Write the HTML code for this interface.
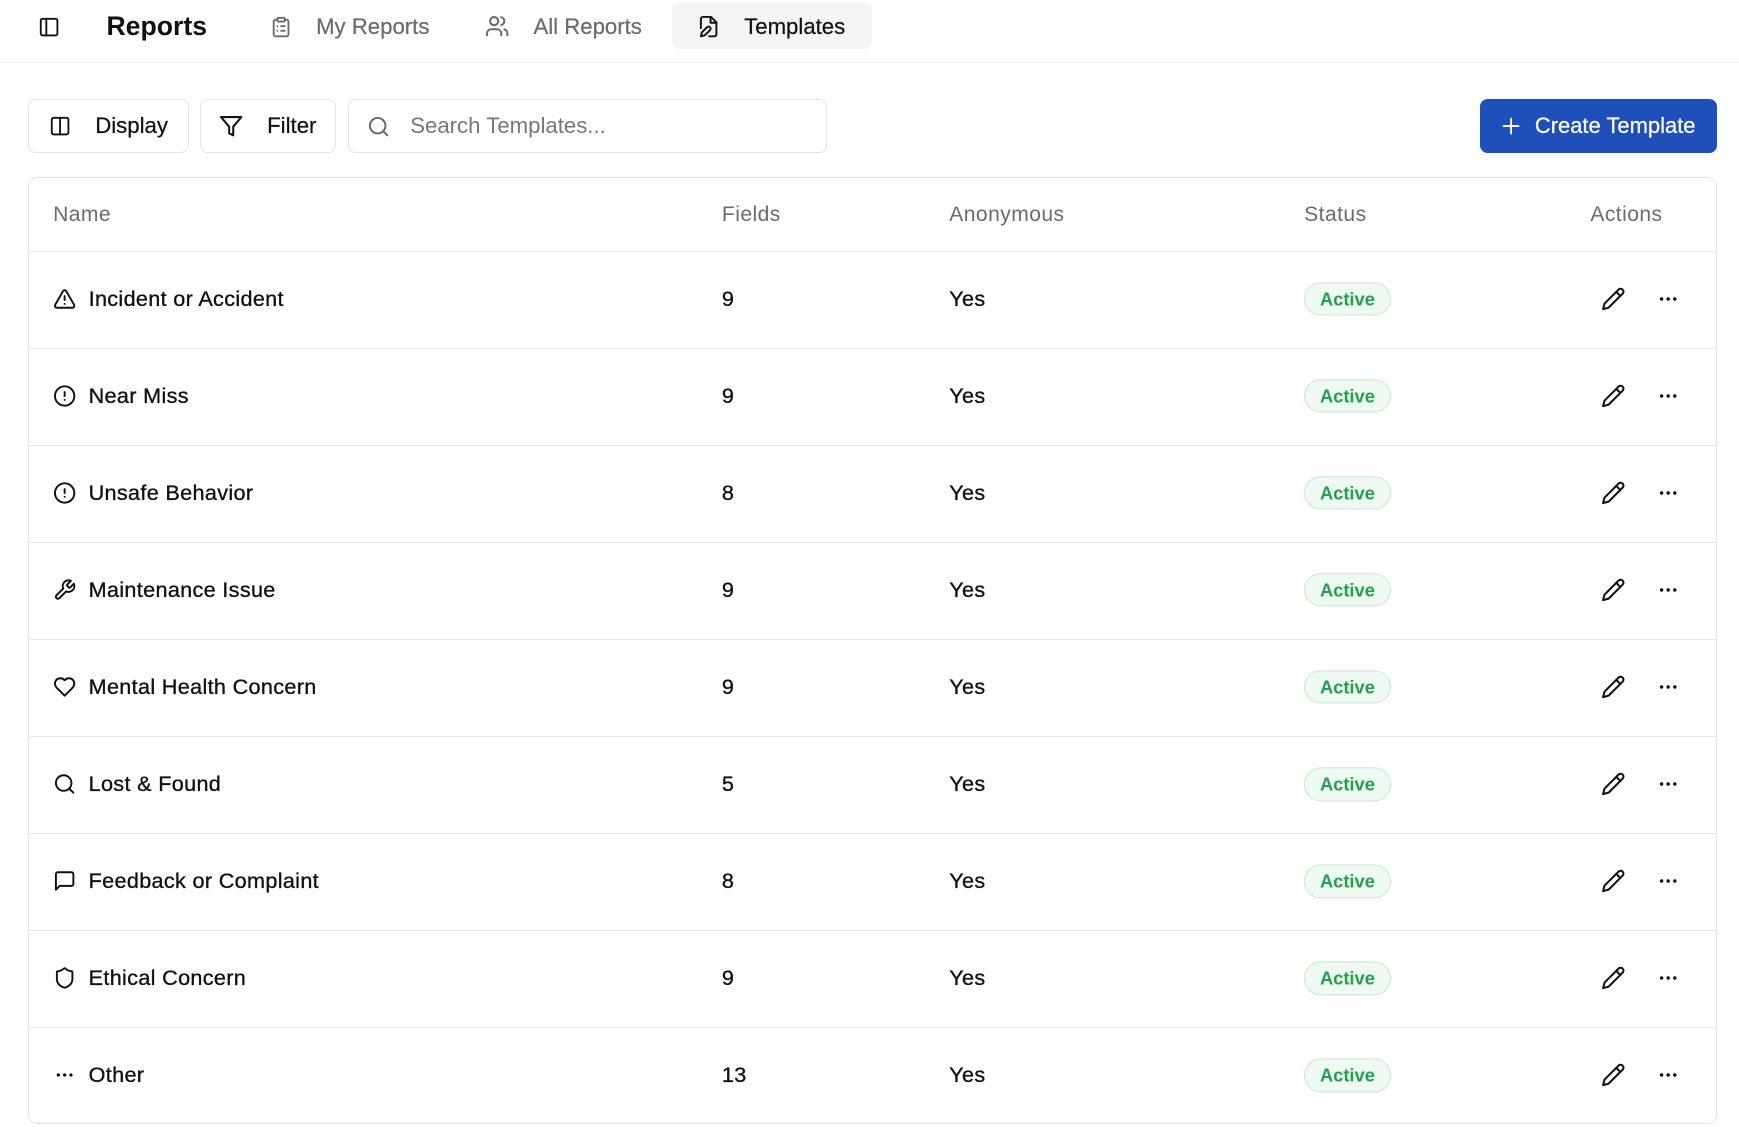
<!DOCTYPE html>
<html><head><meta charset="utf-8">
<style>
*{box-sizing:border-box;margin:0;padding:0}
html,body{width:1739px;height:1127px;overflow:hidden;background:#fff}
#w{zoom:1.1091;width:1568px;height:1016px;position:relative;font-family:"Liberation Sans",sans-serif;color:#111}
.abs{position:absolute}
svg{fill:none;stroke:currentColor;stroke-width:2;stroke-linecap:round;stroke-linejoin:round}
svg.d{fill:currentColor;stroke:none}
.hdr{position:absolute;left:0;top:0;width:1568px;height:57px;border-bottom:1px solid #eee}
.tab{position:absolute;top:2px;height:42px;padding-top:2px;display:flex;align-items:center;font-size:20px;color:#6b6b6b;-webkit-text-stroke:.2px currentColor}
.btn{position:absolute;top:89px;height:49px;border:1px solid #e4e4e7;border-radius:7px;display:flex;align-items:center;font-size:20px;color:#111;padding-top:1px;-webkit-text-stroke:.2px currentColor}
.tbl{position:absolute;left:25px;top:160px;width:1523px;height:853px;border:1px solid #e4e4e7;border-radius:8px}
.th{position:absolute;top:0;height:66px;line-height:66px;font-size:19px;letter-spacing:.4px;color:#6b6b6b}
.row{position:absolute;left:0;width:1521px;height:87.5px;border-top:1px solid #e7e7e7;font-size:19.5px;letter-spacing:.3px;-webkit-text-stroke:.3px currentColor}
.row>*{position:absolute;top:calc(50% - 1px);transform:translateY(-50%)}
.badge{left:1150px;height:30px;width:78px;border:1px solid #c7e8d0;background:#eef9f1;color:#22a04b;font-weight:bold;font-size:16.5px;letter-spacing:0;border-radius:15px;text-align:center;line-height:28px;-webkit-text-stroke:0}
</style></head><body><div id="w">
<div class="hdr">
 <svg class="abs" style="left:34px;top:14px" width="20" height="20" viewBox="0 0 24 24"><rect x="3" y="3" width="18" height="18" rx="2"/><path d="M9 3v18"/></svg>
 <div class="abs" style="left:96px;top:10px;font-size:24px;font-weight:bold;color:#111">Reports</div>
 <div class="tab" style="left:243px"><svg width="20" height="20" viewBox="0 0 24 24"><rect x="8" y="2" width="8" height="4" rx="1"/><path d="M16 4h2a2 2 0 0 1 2 2v14a2 2 0 0 1-2 2H6a2 2 0 0 1-2-2V6a2 2 0 0 1 2-2h2M12 11h4M12 16h4M8 11h.01M8 16h.01"/></svg><span style="margin-left:22px">My Reports</span></div>
 <div class="tab" style="left:437px"><svg width="22" height="22" viewBox="0 0 24 24"><path d="M16 21v-2a4 4 0 0 0-4-4H6a4 4 0 0 0-4 4v2"/><circle cx="9" cy="7" r="4"/><path d="M22 21v-2a4 4 0 0 0-3-3.87M16 3.13a4 4 0 0 1 0 7.75"/></svg><span style="margin-left:22px">All Reports</span></div>
 <div class="tab" style="left:606px;width:180px;background:#f4f4f5;border-radius:8px;color:#111;padding-left:22px"><svg width="21" height="21" viewBox="0 0 24 24"><path d="M4 13.5V4a2 2 0 0 1 2-2h8.5L20 7.5V20a2 2 0 0 1-2 2h-5.5"/><path d="M14 2v6h6"/><path d="M10.4 12.6a2 2 0 1 1 3 3L8 21l-4 1 1-4Z"/></svg><span style="margin-left:22px">Templates</span></div>
</div>
<div class="btn" style="left:25px;width:145px;padding-left:18px"><svg width="20" height="20" viewBox="0 0 24 24"><rect x="3" y="3" width="18" height="18" rx="2"/><path d="M12 3v18"/></svg><span style="margin-left:22px">Display</span></div>
<div class="btn" style="left:180px;width:123px;padding-left:17px"><svg width="22" height="22" viewBox="0 0 24 24"><path d="M22 3H2l8 9.46V19l4 2v-8.54L22 3z"/></svg><span style="margin-left:21px">Filter</span></div>
<div class="btn" style="left:314px;width:432px;padding-left:16px;color:#777;-webkit-text-stroke:0"><svg width="21" height="21" viewBox="0 0 24 24" style="color:#666"><circle cx="11" cy="11" r="8"/><path d="m21 21-4.3-4.3"/></svg><span style="margin-left:18px">Search Templates...</span></div>
<div class="btn" style="left:1334px;width:214px;background:#1f4fb8;border-color:#1f4fb8;color:#fff;padding-left:18px;font-size:19.8px"><svg width="20" height="20" viewBox="0 0 24 24"><path d="M12 4v16M4 12h16"/></svg><span style="margin-left:11px">Create Template</span></div>
<div class="tbl">
 <div class="th" style="left:22px">Name</div>
 <div class="th" style="left:625px">Fields</div>
 <div class="th" style="left:830px">Anonymous</div>
 <div class="th" style="left:1150px">Status</div>
 <div class="th" style="left:1408px">Actions</div>

 <div class="row" style="top:65.5px"><svg style="left:22px" width="21" height="21" viewBox="0 0 24 24"><path d="m21.73 18-8-14a2 2 0 0 0-3.48 0l-8 14A2 2 0 0 0 4 21h16a2 2 0 0 0 1.73-3Z"/><path d="M12 9v4M12 17h.01"/></svg><span style="left:54px">Incident or Accident</span><span style="left:625px">9</span><span style="left:830px">Yes</span><div class="badge">Active</div><svg style="left:1418px" width="22" height="22" viewBox="0 0 24 24"><path d="M17 3a2.85 2.85 0 1 1 4 4L7.5 20.5 2 22l1.5-5.5Z"/><path d="m15 5 4 4"/></svg><svg class="d" style="left:1467px" width="22" height="22" viewBox="0 0 24 24"><circle cx="5.5" cy="12" r="1.7"/><circle cx="12" cy="12" r="1.7"/><circle cx="18.5" cy="12" r="1.7"/></svg></div>

 <div class="row" style="top:153px"><svg style="left:22px" width="21" height="21" viewBox="0 0 24 24"><circle cx="12" cy="12" r="10"/><path d="M12 8v4M12 16h.01"/></svg><span style="left:54px">Near Miss</span><span style="left:625px">9</span><span style="left:830px">Yes</span><div class="badge">Active</div><svg style="left:1418px" width="22" height="22" viewBox="0 0 24 24"><path d="M17 3a2.85 2.85 0 1 1 4 4L7.5 20.5 2 22l1.5-5.5Z"/><path d="m15 5 4 4"/></svg><svg class="d" style="left:1467px" width="22" height="22" viewBox="0 0 24 24"><circle cx="5.5" cy="12" r="1.7"/><circle cx="12" cy="12" r="1.7"/><circle cx="18.5" cy="12" r="1.7"/></svg></div>

 <div class="row" style="top:240.5px"><svg style="left:22px" width="21" height="21" viewBox="0 0 24 24"><circle cx="12" cy="12" r="10"/><path d="M12 8v4M12 16h.01"/></svg><span style="left:54px">Unsafe Behavior</span><span style="left:625px">8</span><span style="left:830px">Yes</span><div class="badge">Active</div><svg style="left:1418px" width="22" height="22" viewBox="0 0 24 24"><path d="M17 3a2.85 2.85 0 1 1 4 4L7.5 20.5 2 22l1.5-5.5Z"/><path d="m15 5 4 4"/></svg><svg class="d" style="left:1467px" width="22" height="22" viewBox="0 0 24 24"><circle cx="5.5" cy="12" r="1.7"/><circle cx="12" cy="12" r="1.7"/><circle cx="18.5" cy="12" r="1.7"/></svg></div>

 <div class="row" style="top:328px"><svg style="left:22px" width="21" height="21" viewBox="0 0 24 24"><path d="M14.7 6.3a1 1 0 0 0 0 1.4l1.6 1.6a1 1 0 0 0 1.4 0l3.77-3.77a6 6 0 0 1-7.94 7.94l-6.91 6.91a2.12 2.12 0 0 1-3-3l6.91-6.91a6 6 0 0 1 7.94-7.94l-3.76 3.76z"/></svg><span style="left:54px">Maintenance Issue</span><span style="left:625px">9</span><span style="left:830px">Yes</span><div class="badge">Active</div><svg style="left:1418px" width="22" height="22" viewBox="0 0 24 24"><path d="M17 3a2.85 2.85 0 1 1 4 4L7.5 20.5 2 22l1.5-5.5Z"/><path d="m15 5 4 4"/></svg><svg class="d" style="left:1467px" width="22" height="22" viewBox="0 0 24 24"><circle cx="5.5" cy="12" r="1.7"/><circle cx="12" cy="12" r="1.7"/><circle cx="18.5" cy="12" r="1.7"/></svg></div>

 <div class="row" style="top:415.5px"><svg style="left:22px" width="21" height="21" viewBox="0 0 24 24"><path d="M19 14c1.49-1.46 3-3.21 3-5.5A5.5 5.5 0 0 0 16.5 3c-1.76 0-3 .5-4.5 2-1.5-1.5-2.74-2-4.5-2A5.5 5.5 0 0 0 2 8.5c0 2.3 1.5 4.05 3 5.5l7 7Z"/></svg><span style="left:54px">Mental Health Concern</span><span style="left:625px">9</span><span style="left:830px">Yes</span><div class="badge">Active</div><svg style="left:1418px" width="22" height="22" viewBox="0 0 24 24"><path d="M17 3a2.85 2.85 0 1 1 4 4L7.5 20.5 2 22l1.5-5.5Z"/><path d="m15 5 4 4"/></svg><svg class="d" style="left:1467px" width="22" height="22" viewBox="0 0 24 24"><circle cx="5.5" cy="12" r="1.7"/><circle cx="12" cy="12" r="1.7"/><circle cx="18.5" cy="12" r="1.7"/></svg></div>

 <div class="row" style="top:503px"><svg style="left:22px" width="21" height="21" viewBox="0 0 24 24"><circle cx="11" cy="11" r="8"/><path d="m21 21-4.3-4.3"/></svg><span style="left:54px">Lost &amp; Found</span><span style="left:625px">5</span><span style="left:830px">Yes</span><div class="badge">Active</div><svg style="left:1418px" width="22" height="22" viewBox="0 0 24 24"><path d="M17 3a2.85 2.85 0 1 1 4 4L7.5 20.5 2 22l1.5-5.5Z"/><path d="m15 5 4 4"/></svg><svg class="d" style="left:1467px" width="22" height="22" viewBox="0 0 24 24"><circle cx="5.5" cy="12" r="1.7"/><circle cx="12" cy="12" r="1.7"/><circle cx="18.5" cy="12" r="1.7"/></svg></div>

 <div class="row" style="top:590.5px"><svg style="left:22px" width="21" height="21" viewBox="0 0 24 24"><path d="M21 15a2 2 0 0 1-2 2H7l-4 4V5a2 2 0 0 1 2-2h14a2 2 0 0 1 2 2z"/></svg><span style="left:54px">Feedback or Complaint</span><span style="left:625px">8</span><span style="left:830px">Yes</span><div class="badge">Active</div><svg style="left:1418px" width="22" height="22" viewBox="0 0 24 24"><path d="M17 3a2.85 2.85 0 1 1 4 4L7.5 20.5 2 22l1.5-5.5Z"/><path d="m15 5 4 4"/></svg><svg class="d" style="left:1467px" width="22" height="22" viewBox="0 0 24 24"><circle cx="5.5" cy="12" r="1.7"/><circle cx="12" cy="12" r="1.7"/><circle cx="18.5" cy="12" r="1.7"/></svg></div>

 <div class="row" style="top:678px"><svg style="left:22px" width="21" height="21" viewBox="0 0 24 24"><path d="M20 13c0 5-3.5 7.5-7.66 8.95a1 1 0 0 1-.67-.01C7.5 20.5 4 18 4 13V6a1 1 0 0 1 1-1c2 0 4.5-1.2 6.24-2.72a1.17 1.17 0 0 1 1.52 0C14.51 3.81 17 5 19 5a1 1 0 0 1 1 1z"/></svg><span style="left:54px">Ethical Concern</span><span style="left:625px">9</span><span style="left:830px">Yes</span><div class="badge">Active</div><svg style="left:1418px" width="22" height="22" viewBox="0 0 24 24"><path d="M17 3a2.85 2.85 0 1 1 4 4L7.5 20.5 2 22l1.5-5.5Z"/><path d="m15 5 4 4"/></svg><svg class="d" style="left:1467px" width="22" height="22" viewBox="0 0 24 24"><circle cx="5.5" cy="12" r="1.7"/><circle cx="12" cy="12" r="1.7"/><circle cx="18.5" cy="12" r="1.7"/></svg></div>

 <div class="row" style="top:765.5px"><svg class="d" style="left:22px" width="21" height="21" viewBox="0 0 24 24"><circle cx="5.5" cy="12" r="1.7"/><circle cx="12" cy="12" r="1.7"/><circle cx="18.5" cy="12" r="1.7"/></svg><span style="left:54px">Other</span><span style="left:625px">13</span><span style="left:830px">Yes</span><div class="badge">Active</div><svg style="left:1418px" width="22" height="22" viewBox="0 0 24 24"><path d="M17 3a2.85 2.85 0 1 1 4 4L7.5 20.5 2 22l1.5-5.5Z"/><path d="m15 5 4 4"/></svg><svg class="d" style="left:1467px" width="22" height="22" viewBox="0 0 24 24"><circle cx="5.5" cy="12" r="1.7"/><circle cx="12" cy="12" r="1.7"/><circle cx="18.5" cy="12" r="1.7"/></svg></div>
</div>
</div>
</body></html>
